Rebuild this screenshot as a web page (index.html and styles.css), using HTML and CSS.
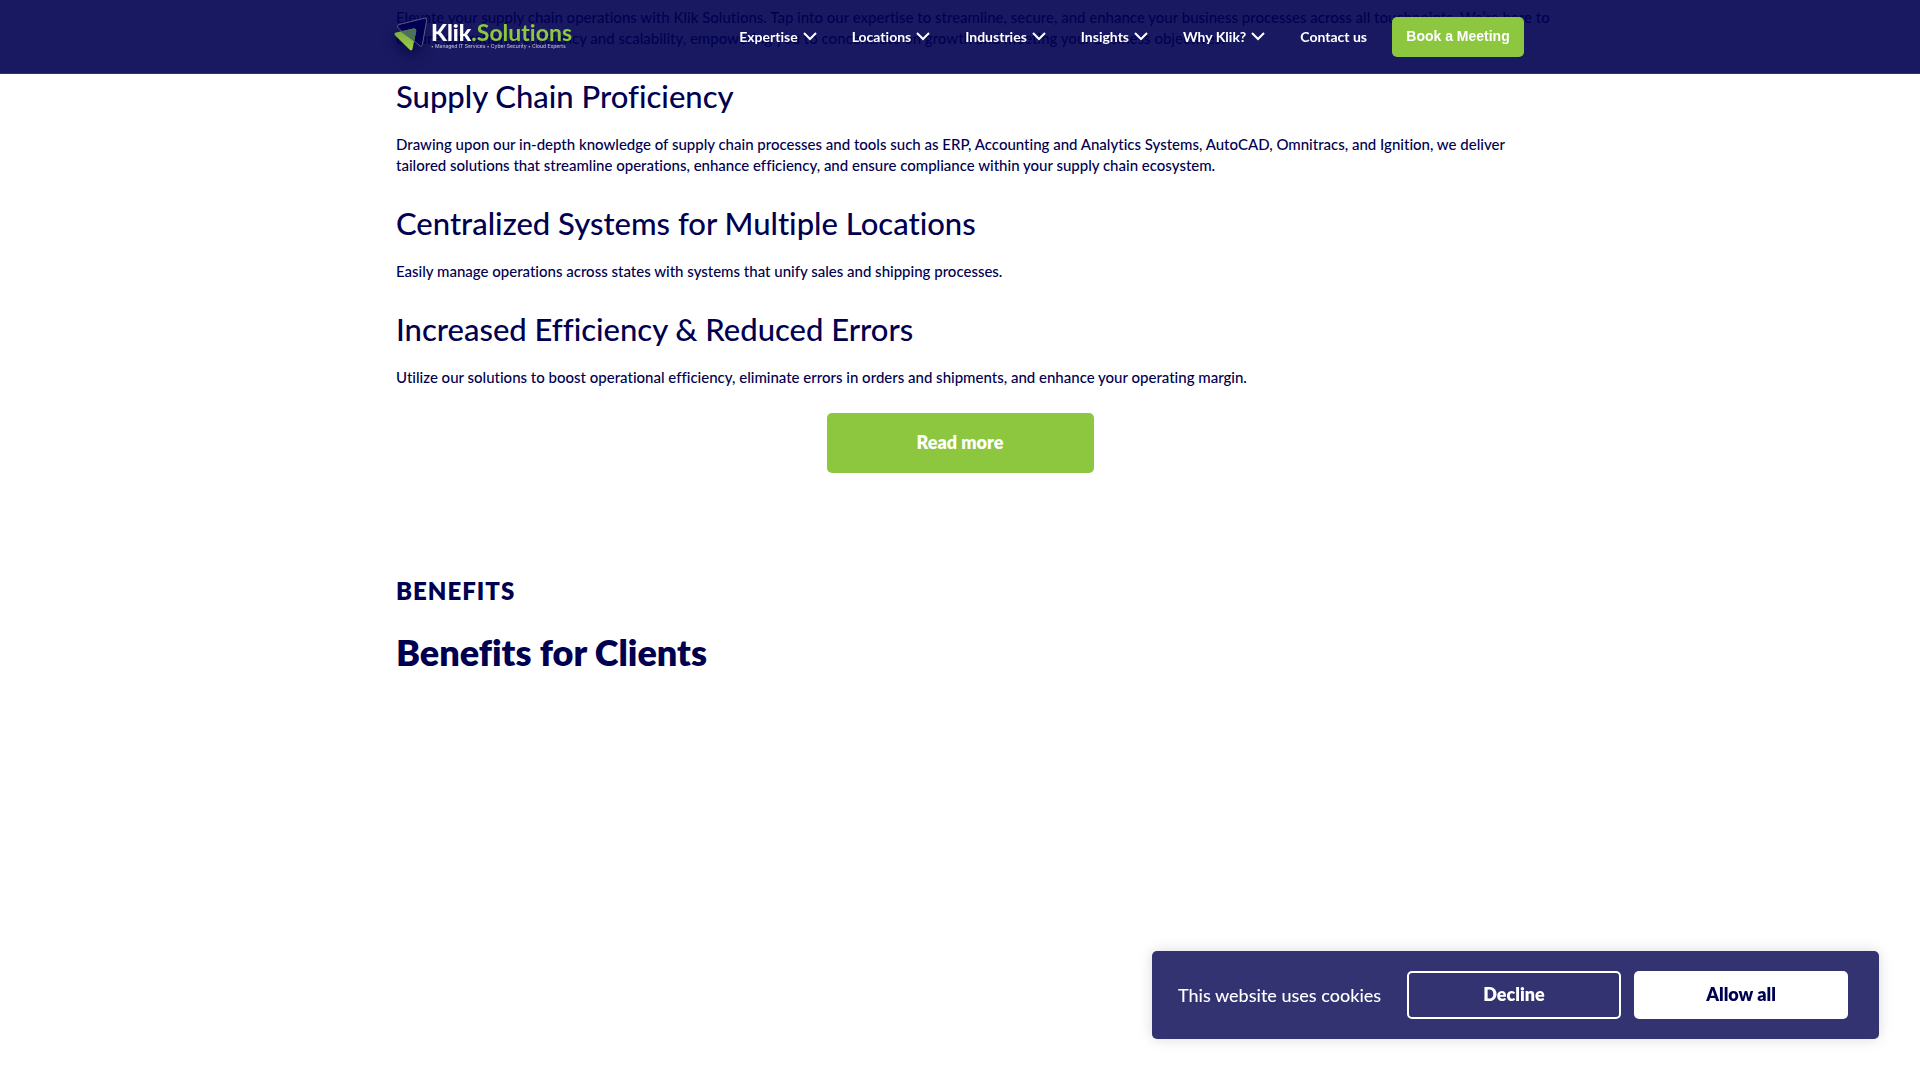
FILE: index.html
```html
<!DOCTYPE html>
<html lang="en">
<head>
<meta charset="utf-8">
<meta name="viewport" content="width=device-width, initial-scale=1">
<title>Klik Solutions</title>
<link rel="stylesheet" href="styles.css">
</head>
<body>
<svg class="sprite" aria-hidden="true">
  <symbol id="chevron" viewBox="0 0 14 9"><path d="M1 1l6 6 6-6" fill="none" stroke="currentColor" stroke-width="2"/></symbol>
</svg>
<header class="header">
  <div class="header-inner">
    <a class="logo" href="#" aria-label="Klik Solutions home">
      <svg class="logo-mark" viewBox="0 0 36 40" aria-hidden="true">
        <defs>
          <linearGradient id="leaf" x1="0" y1="0" x2="0" y2="1"><stop offset="0" stop-color="#7ea53f"/><stop offset="1" stop-color="#9ad043"/></linearGradient>
        </defs>
        <path d="M5 7.500L30.500 1.200Q33 .8 32.600 3.500L28.500 27Q27.500 31 25 28L4 11Q2 8.500 5 7.500Z" fill="#000050" stroke="#5a5a8c"/>
        <path d="M2 15.500L19.500 11.500Q22.500 11.200 22.200 14L18.500 32Q17.500 34.500 15.500 32.500L1.200 18.500Q-.4 16.300 2 15.500Z" fill="url(#leaf)"/>
        <path d="M6.500 14.500L19.500 11.500Q22.500 11.200 22.200 14L20 24.500Z" fill="#4c705b"/>
      </svg>
      <span class="logo-words">
        <span class="logo-name">Klik<span class="logo-accent">.Solutions</span></span>
        <span class="logo-tagline">• Managed IT Services • Cyber Security • Cloud Experts</span>
      </span>
    </a>
    <nav class="nav">
      <a href="#">Expertise <svg class="chevron"><use href="#chevron"/></svg></a>
      <a href="#">Locations <svg class="chevron"><use href="#chevron"/></svg></a>
      <a href="#">Industries <svg class="chevron"><use href="#chevron"/></svg></a>
      <a href="#">Insights <svg class="chevron"><use href="#chevron"/></svg></a>
      <a href="#">Why Klik? <svg class="chevron"><use href="#chevron"/></svg></a>
      <a href="#">Contact us</a>
    </nav>
    <button class="button book" type="button">Book a Meeting</button>
  </div>
</header>
<main class="content">
  <p>Elevate your supply chain operations with Klik Solutions. Tap into our expertise to streamline, secure, and enhance your business processes across all touchpoints. We’re here to<br>ensure operational efficiency and scalability, empowering you to concentrate on growth and meeting your business objectives.</p>
  <h3>Supply Chain Proficiency</h3>
  <p>Drawing upon our in-depth knowledge of supply chain processes and tools such as ERP, Accounting and Analytics Systems, AutoCAD, Omnitracs, and Ignition, we deliver<br>tailored solutions that streamline operations, enhance efficiency, and ensure compliance within your supply chain ecosystem.</p>
  <h3>Centralized Systems for Multiple Locations</h3>
  <p>Easily manage operations across states with systems that unify sales and shipping processes.</p>
  <h3>Increased Efficiency &amp; Reduced Errors</h3>
  <p>Utilize our solutions to boost operational efficiency, eliminate errors in orders and shipments, and enhance your operating margin.</p>
  <button class="button read-more" type="button">Read more</button>
  <section class="benefits">
    <p class="eyebrow">Benefits</p>
    <h2>Benefits for Clients</h2>
  </section>
</main>
<aside class="cookies" aria-label="Cookie notice">
  <p>This website uses cookies</p>
  <button class="button decline" type="button">Decline</button>
  <button class="button allow" type="button">Allow all</button>
</aside>
</body>
</html>
```
FILE: styles.css
```css
* { box-sizing: border-box; }
body {
  margin: 0;
  background: #fff;
  color: #000050;
  font: 500 15px/21px Lato, "Liberation Sans", sans-serif;
  font-variant-ligatures: none;
}
p, h2, h3 { margin: 0; }
a { color: inherit; text-decoration: none; }
.sprite { display: none; }
.button {
  padding: 0 0 2px;
  border: 0;
  border-radius: 5px;
  background: #8dc63f;
  color: #fff;
  font-family: inherit;
  font-size: 18px;
  font-weight: 800;
  cursor: pointer;
}
.header {
  position: fixed;
  z-index: 2;
  top: 0;
  left: 0;
  right: 0;
  height: 74px;
  background: rgba(0, 0, 80, .9);
  border-bottom: 1px solid #333372;
  color: #fff;
}
.header-inner {
  display: flex;
  align-items: center;
  max-width: 1128px;
  height: 73px;
  margin: 0 auto;
}
.logo { display: flex; align-items: flex-start; gap: 1px; margin-left: -2px; }
.logo-mark { width: 36px; height: 40px; filter: drop-shadow(-2px 8px 6px rgba(0, 0, 60, .5)); }
.logo-words { display: flex; flex-direction: column; padding-top: 5px; white-space: nowrap; }
.logo-name { font-size: 23px; line-height: 20px; font-weight: 900; }
.logo-accent { color: #8dc63f; font-weight: 700; }
.logo-tagline { font-family: Inter, sans-serif; font-size: 5px; line-height: 8px; color: #b5b5cc; }
.nav { display: flex; gap: 35px; margin-left: auto; font-size: 14px; font-weight: 700; white-space: nowrap; }
.nav a { display: flex; align-items: center; gap: 5px; }
.chevron { width: 14px; height: 9px; }
.book { width: 132px; height: 40px; margin-left: 25px; font-family: "Liberation Sans", Arial, sans-serif; font-size: 14px; }
.content { display: flex; flex-direction: column; max-width: 1128px; margin: 0 auto; padding-top: 7px; }
.content p { white-space: nowrap; }
.content h3 { margin: 25px 0 15px; font-size: 31px; line-height: 45px; font-weight: 500; }
.read-more { align-self: center; width: 267px; height: 60px; margin-top: 25px; }
.benefits { padding-top: 100px; }
.content .eyebrow { font-size: 24px; line-height: 36px; font-weight: 800; letter-spacing: 1px; text-transform: uppercase; }
.benefits h2 { margin-top: 16px; font-size: 36px; line-height: 54px; font-weight: 800; }
.cookies {
  position: fixed;
  right: 41px;
  bottom: 41px;
  display: flex;
  align-items: center;
  padding: 20px 31px 20px 26px;
  border-radius: 5px;
  background: #333372;
  box-shadow: 0 0 14px rgba(0, 0, 0, .15);
  color: #fff;
  font-size: 18px;
}
.cookies p { width: 209px; margin-right: 20px; white-space: nowrap; }
.cookies .button { width: 214px; height: 48px; }
.decline { background: transparent; border: 2px solid #fff; }
.allow { margin-left: 13px; background: #fff; color: #000050; }
```
